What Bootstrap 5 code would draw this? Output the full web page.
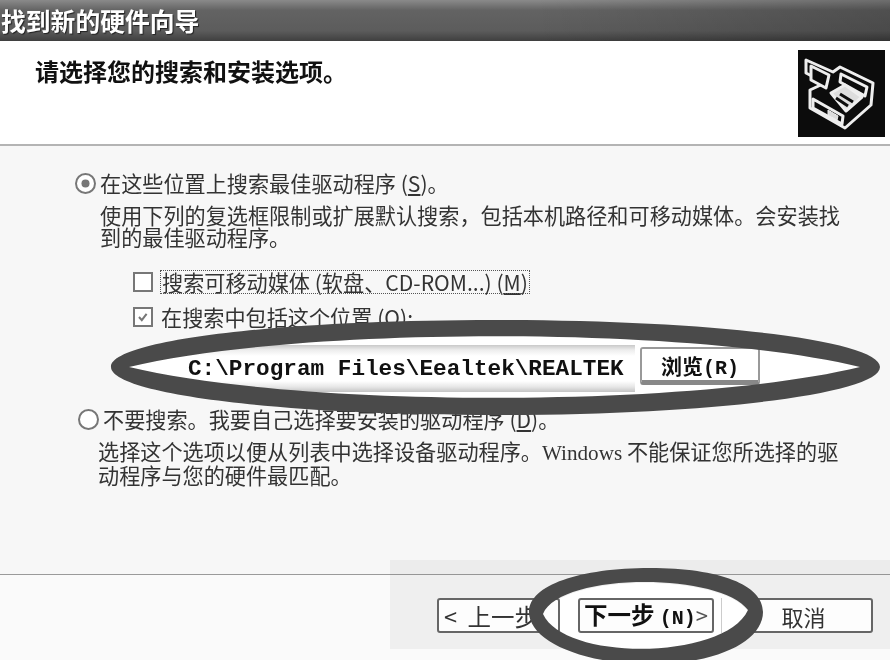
<!DOCTYPE html>
<html lang="zh-CN">
<head>
    <meta charset="UTF-8">
    <title>找到新的硬件向导</title>
    <link href="https://cdn.jsdelivr.net/npm/bootstrap@5.3.3/dist/css/bootstrap.min.css" rel="stylesheet">
    <style>
        body { background: #fff; font-family: "Noto Sans CJK SC", "Liberation Sans", sans-serif; color: #2a2a2a; }
        .wizard { width: 890px; height: 660px; overflow: hidden; filter: blur(.45px); }
        .wiz-title { height: 41px; padding-left: 1px; font-size: 24.8px; font-weight: 700; line-height: 40px; color: #fff; text-shadow: 1px 1px 1px #222;
            background: linear-gradient(90deg, rgba(0,0,0,0) 60%, rgba(0,0,0,.2) 100%), linear-gradient(180deg, #8a8a8a 0, #636363 25%, #5c5c5c 75%, #3f3f3f 100%); }
        .wiz-head { height: 105px; padding: 9px 5px 0 35px; border-bottom: 2px solid #b4b4b4; }
        .wiz-head h1 { margin: 6px 0 0; font-size: 24px; line-height: 30px; font-weight: 700; color: #111; }
        .hw-icon { width: 87px; height: 87px; flex: none; }
        .wiz-body { height: 428px; padding: 26px 0 0 75px; background: #f7f7f7; font-size: 21.15px; line-height: 22px; white-space: nowrap; }
        .opt-row { height: 22px; }
        .opt-row .form-check-input, .sub-row .form-check-input { float: none; margin: 0; flex: none; border: 2px solid #777; box-shadow: none; background-color: #fff; }
        .opt-row .form-check-input { width: 21px; height: 21px; }
        .opt-row .form-check-input:checked { background-color: #fff; background-image: url("data:image/svg+xml,%3Csvg xmlns='http://www.w3.org/2000/svg' viewBox='-4 -4 8 8'%3E%3Ccircle r='1.9' fill='%23777'/%3E%3C/svg%3E"); }
        .sub-row .form-check-input { width: 20px; height: 20px; border-radius: 0; }
        .sub-row .form-check-input:checked { background-color: #fff; background-image: url("data:image/svg+xml,%3Csvg xmlns='http://www.w3.org/2000/svg' viewBox='0 0 20 20'%3E%3Cpath d='M5 10l3.500 4 6-8' fill='none' stroke='%23777' stroke-width='2.500'/%3E%3C/svg%3E"); }
        .sub-row { height: 24px; margin-left: 58px; color: #333; }
        .sub-first { margin-top: 22px; }
        .sub-second { margin-top: 11px; }
        .focus-dots { outline: 1px dotted #555; line-height: 22px; padding: 0 1px; }
        .opt-text { color: #333; }
        .desc-one { margin: 10px 0 0 25px; color: #333; }
        .desc-two { margin: 10px 0 0 23px; color: #333; }
        .win-word { font-family: "Liberation Serif", serif; }
        .path-row { position: relative; height: 47px; margin: 16px 0 0 100px; }
        .lens-back { position: absolute; left: -175px; top: -345px; width: 890px; height: 660px; }
        .path-field { position: relative; width: 460px; height: 47px; padding-left: 13px; font: 700 22.7px/48px "Liberation Mono", monospace; color: #111; background: linear-gradient(180deg, #c9c9c9 0, #ededed 5px, #fff 11px, #fff 36px, #e6e6e6 42px, #c4c4c4 100%); }
        .browse-btn { position: relative; width: 120px; height: 38px; margin: 2px 0 0 5px; padding: 0; font: 700 21px/32px "Noto Sans CJK SC", sans-serif; color: #111; background: #fff; border: 2px solid #999; border-bottom: 5px solid #888; border-radius: 3px; }
        .key-mono { font-family: "Liberation Mono", monospace; font-size: 20px; font-weight: 700; }
        .second-opt { margin: 16px 0 0 3px; }
        .wiz-foot { position: relative; height: 86px; padding: 23px 17px 0 437px; background: #fafafa; border-top: 1px solid #9a9a9a; }
        .foot-patch { position: absolute; left: 390px; top: -15px; width: 500px; height: 89px; background: rgba(120,120,120,.08); }
        .foot-lens { position: absolute; left: 0; top: -574px; width: 890px; height: 660px; }
        .wiz-btn { position: relative; height: 35px; padding: 0; font-size: 23.5px; line-height: 28px; color: #333; background: #fdfdfd; border: 2px solid #666; border-radius: 3px; }
        .back-btn { width: 123px; text-align: left; padding-left: 5px; white-space: nowrap; }
        .next-btn { width: 136px; margin-left: 18px; padding-left: 4px; text-align: left; font-weight: 700; color: #111; white-space: nowrap; }
        .next-btn::after { content: ""; position: absolute; right: -10px; top: -2px; width: 1px; height: 35px; background: #ccc; }
        .thin-arrow { font-weight: 400; color: #555; font-size: 22px; }
        .cancel-btn { width: 125px; margin-left: 34px; padding-right: 14px; font-size: 22px; }
        .rings { position: absolute; left: 0; top: 0; width: 890px; height: 660px; pointer-events: none; }
    </style>
</head>
<body class="m-0">
    <div class="wizard position-relative d-flex flex-column">
        <div class="wiz-title">找到新的硬件向导</div>

        <div class="wiz-head d-flex justify-content-between bg-white">
            <h1>请选择您的搜索和安装选项。</h1>
            <svg class="hw-icon" viewBox="0 0 87 87">
                <rect width="87" height="87" fill="#0c0c0c"/>
                <g fill="#0c0c0c" stroke="#eee" stroke-width="3" stroke-linejoin="round">
                    <path d="M8 10 35 22 42 17 75 33 73 55 47 78 12 58 12 40 27 33 8 23Z"/>
                    <path d="M13 16 31 25 28 38 13 30Z"/>
                    <path d="M43 24 69 37 67 46 42 32Z"/>
                    <path d="M33 43 47 35 64 47 48 61Z" fill="#ddd"/>
                    <path d="M42 44 55 52M38 48 50 56" stroke="#0c0c0c"/>
                    <path d="M15 49 45 66 44 74 15 58Z"/>
                    <path d="M30 60 40 66 39 70 30 65Z" fill="#ddd" stroke-width="1"/>
                </g>
            </svg>
        </div>

        <div class="wiz-body">
            <div class="opt-row d-flex align-items-center gap-1">
                <input class="form-check-input" type="radio" name="mode" checked>
                <span class="opt-text">在这些位置上搜索最佳驱动程序 (<u>S</u>)。</span>
            </div>
            <div class="desc-one">使用下列的复选框限制或扩展默认搜索，包括本机路径和可移动媒体。会安装找<br>到的最佳驱动程序。</div>

            <div class="sub-row sub-first d-flex align-items-center gap-2">
                <input class="form-check-input" type="checkbox">
                <span class="focus-dots">搜索可移动媒体 (软盘、CD-ROM...) (<u>M</u>)</span>
            </div>
            <div class="sub-row sub-second d-flex align-items-center gap-2">
                <input class="form-check-input" type="checkbox" checked>
                <span>在搜索中包括这个位置 (<u>O</u>):</span>
            </div>

            <div class="path-row d-flex">
                <svg class="lens-back" viewBox="0 0 890 660">
                    <path d="M129 367C300 326 690 326 860 367 690 408 300 408 129 367Z" fill="#fff"/>
                </svg>
                <div class="path-field">C:\Program Files\Eealtek\REALTEK</div>
                <button class="browse-btn" type="button">浏览<span class="key-mono">(R)</span></button>
            </div>

            <div class="opt-row second-opt d-flex align-items-center gap-1">
                <input class="form-check-input" type="radio" name="mode">
                <span class="opt-text">不要搜索。我要自己选择要安装的驱动程序 (<u>D</u>)。</span>
            </div>
            <div class="desc-two">选择这个选项以便从列表中选择设备驱动程序。<span class="win-word">Windows</span> 不能保证您所选择的驱<br>动程序与您的硬件最匹配。</div>
        </div>

        <div class="wiz-foot d-flex align-items-start">
            <div class="foot-patch"></div>
            <svg class="foot-lens" viewBox="0 0 890 660">
                <path d="M543 614C560 572 720 572 748 610 725 660 565 662 543 614Z" fill="#fff"/>
            </svg>
            <button class="wiz-btn back-btn" type="button">&lt;&nbsp; 上一步</button>
            <button class="wiz-btn next-btn" type="button">下一步 <span class="key-mono">(N)</span><span class="thin-arrow">&gt;</span></button>
            <button class="wiz-btn cancel-btn" type="button">取消</button>
        </div>

        <!-- 两个手绘的圈 -->
        <svg class="rings" viewBox="0 0 890 660">
            <path fill="#4a4a4a" fill-rule="evenodd" d="M111 367C111 340 280 320 495 320 710 320 880 340 880 367 880 394 710 415 495 415 280 415 111 394 111 367ZM129 367C300 326 690 326 860 367 690 408 300 408 129 367Z"/>
            <path fill="#4a4a4a" fill-rule="evenodd" d="M529 612C529 585 580 568 650 568 720 568 763 585 763 612 763 640 720 664 650 664 580 664 529 640 529 612ZM543 614C560 572 720 572 748 610 725 660 565 662 543 614Z"/>
        </svg>
    </div>

    <script src="https://cdn.jsdelivr.net/npm/bootstrap@5.3.3/dist/js/bootstrap.bundle.min.js"></script>
</body>
</html>
